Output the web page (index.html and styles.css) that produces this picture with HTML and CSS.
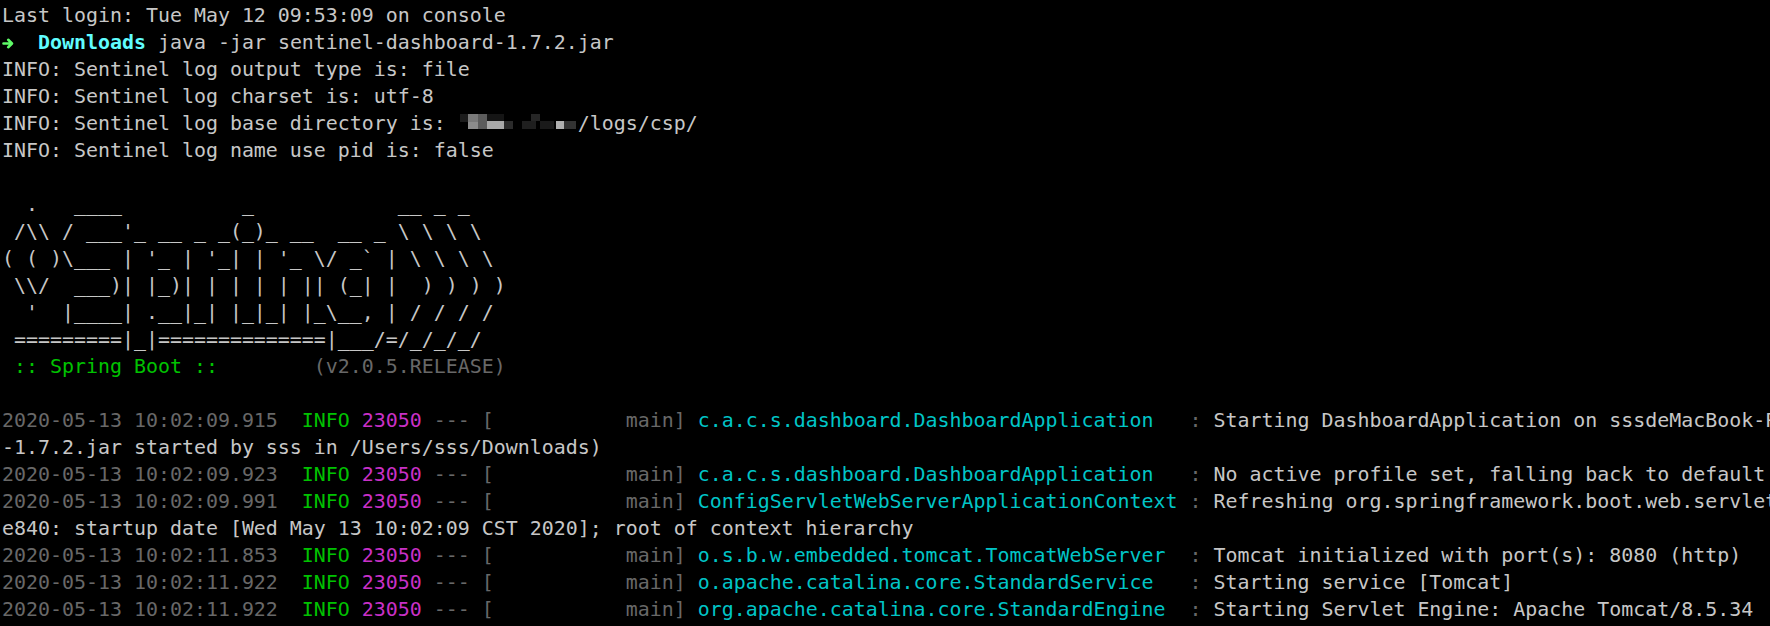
FILE: index.html
```html
<!DOCTYPE html>
<html>
<head>
<meta charset="utf-8">
<title>Terminal</title>
<link rel="stylesheet" href="styles.css">
</head>
<body>
<div class="term">
<div class="ln">Last login: Tue May 12 09:53:09 on console</div>
<div class="ln"><span class="cell"><svg class="arrow" width="12" height="27" viewBox="0 0 12 27"><path d="M1.5 14.5 H9.5 M6.2 10.8 L10 14.5 L6.2 18.2" fill="none" stroke="#5ffa68" stroke-width="2.6" stroke-linecap="round" stroke-linejoin="round"/></svg></span>  <span class="bc">Downloads</span> java -jar sentinel-dashboard-1.7.2.jar</div>
<div class="ln">INFO: Sentinel log output type is: file</div>
<div class="ln">INFO: Sentinel log charset is: utf-8</div>
<div class="ln">INFO: Sentinel log base directory is: <svg class="mosaic" width="120" height="26" viewBox="0 0 120 26"><rect x="2" y="4" width="8" height="8" fill="#1c1c1c"/><rect x="10" y="4" width="10" height="8" fill="#7a7a7a"/><rect x="10" y="12" width="10" height="7" fill="#8c8c8c"/><rect x="20" y="4" width="9" height="15" fill="#5c5c5c"/><rect x="29" y="4" width="17" height="7" fill="#151515"/><rect x="29" y="11" width="17" height="8" fill="#a9a9a9"/><rect x="46" y="11" width="9" height="8" fill="#2b2b2b"/><rect x="64" y="11" width="14" height="8" fill="#1f1f1f"/><rect x="73" y="4" width="9" height="7" fill="#262626"/><rect x="82" y="11" width="14" height="8" fill="#1a1a1a"/><rect x="98" y="11" width="8" height="8" fill="#b0b0b0"/><rect x="106" y="11" width="12" height="8" fill="#333333"/></svg>/logs/csp/</div>
<div class="ln">INFO: Sentinel log name use pid is: false</div>
<div class="ln"> </div>
<div class="ln">  .   ____          _            __ _ _</div>
<div class="ln"> /\\ / ___'_ __ _ _(_)_ __  __ _ \ \ \ \</div>
<div class="ln">( ( )\___ | '_ | '_| | '_ \/ _` | \ \ \ \</div>
<div class="ln"> \\/  ___)| |_)| | | | | || (_| |  ) ) ) )</div>
<div class="ln">  '  |____| .__|_| |_|_| |_\__, | / / / /</div>
<div class="ln"> =========|_|==============|___/=/_/_/_/</div>
<div class="ln"> <span class="g">:: Spring Boot ::</span>        <span class="f">(v2.0.5.RELEASE)</span></div>
<div class="ln"> </div>
<div class="ln"><span class="f">2020-05-13 10:02:09.915</span> <span class="g"> INFO</span> <span class="m">23050</span> <span class="f">--- [           main]</span> <span class="c">c.a.c.s.dashboard.DashboardApplication  </span> <span class="f">:</span> Starting DashboardApplication on sssdeMacBook-Pro.local with PID 23050 (/Users/sss/Downloads/sentinel-dashboard</div>
<div class="ln">-1.7.2.jar started by sss in /Users/sss/Downloads)</div>
<div class="ln"><span class="f">2020-05-13 10:02:09.923</span> <span class="g"> INFO</span> <span class="m">23050</span> <span class="f">--- [           main]</span> <span class="c">c.a.c.s.dashboard.DashboardApplication  </span> <span class="f">:</span> No active profile set, falling back to default profiles: default</div>
<div class="ln"><span class="f">2020-05-13 10:02:09.991</span> <span class="g"> INFO</span> <span class="m">23050</span> <span class="f">--- [           main]</span> <span class="c">ConfigServletWebServerApplicationContext</span> <span class="f">:</span> Refreshing org.springframework.boot.web.servlet.context.AnnotationConfigServletWebServerApplicationContext@6d5</div>
<div class="ln">e840: startup date [Wed May 13 10:02:09 CST 2020]; root of context hierarchy</div>
<div class="ln"><span class="f">2020-05-13 10:02:11.853</span> <span class="g"> INFO</span> <span class="m">23050</span> <span class="f">--- [           main]</span> <span class="c">o.s.b.w.embedded.tomcat.TomcatWebServer </span> <span class="f">:</span> Tomcat initialized with port(s): 8080 (http)</div>
<div class="ln"><span class="f">2020-05-13 10:02:11.922</span> <span class="g"> INFO</span> <span class="m">23050</span> <span class="f">--- [           main]</span> <span class="c">o.apache.catalina.core.StandardService  </span> <span class="f">:</span> Starting service [Tomcat]</div>
<div class="ln"><span class="f">2020-05-13 10:02:11.922</span> <span class="g"> INFO</span> <span class="m">23050</span> <span class="f">--- [           main]</span> <span class="c">org.apache.catalina.core.StandardEngine </span> <span class="f">:</span> Starting Servlet Engine: Apache Tomcat/8.5.34</div>
</div>
</body>
</html>
```
FILE: styles.css
```css
html, body {
  margin: 0;
  padding: 0;
  background: #000;
  width: 1770px;
  height: 626px;
  overflow: hidden;
}

.term {
  padding: 1.5px 0 0 2px;
  font-family: "DejaVu Sans Mono", "Liberation Mono", monospace;
  font-size: 19.93px;
  line-height: 27px;
  color: #c7c7c7;
}

.ln {
  white-space: pre;
  overflow: hidden;
  height: 27px;
}

.cell {
  display: inline-block;
  width: 12px;
  height: 27px;
  vertical-align: top;
}

.arrow {
  display: block;
}

.mosaic {
  display: inline-block;
  vertical-align: top;
}

.f { color: #686868; }
.g { color: #00c200; }
.m { color: #c930c7; }
.c { color: #00c5c7; }
.bc { color: #60fdff; font-weight: bold; }
```
